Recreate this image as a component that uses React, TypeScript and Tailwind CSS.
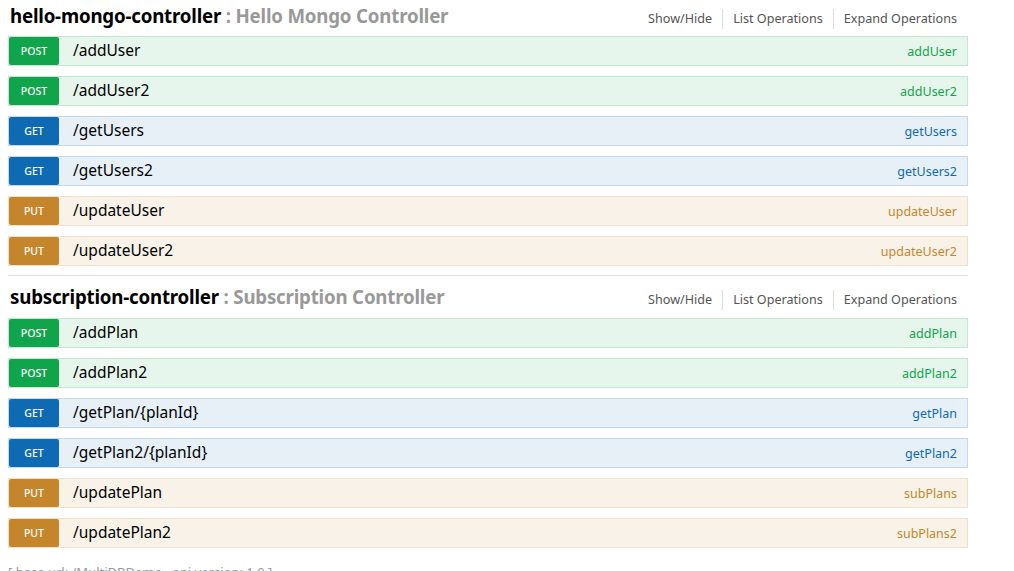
import React from "react";

type Method = "post" | "get" | "put";

const styles: Record<Method, { row: string; badge: string; label: string }> = {
  post: {
    row: "bg-[#e7f6ec] border-[#c3e8d1]",
    badge: "bg-[#10a54a]",
    label: "text-[#10a54a]",
  },
  get: {
    row: "bg-[#e7f0f7] border-[#c3d9ec]",
    badge: "bg-[#0f6ab4]",
    label: "text-[#0f6ab4]",
  },
  put: {
    row: "bg-[#f9f2e9] border-[#f0e0ca]",
    badge: "bg-[#c5862b]",
    label: "text-[#c5862b]",
  },
};

type Op = { method: Method; path: string; name: string };

function Row({ op }: { op: Op }) {
  const s = styles[op.method];
  return (
    <div className={`flex items-center h-[30px] border ${s.row}`}>
      <div
        className={`w-[50px] h-[28px] rounded-[2px] flex items-center justify-center pt-[2px] text-white text-[10.5px] font-medium uppercase ${s.badge}`}
      >
        {op.method}
      </div>
      <div className="pl-[14px] text-[15.5px] text-black flex-1 leading-none pb-[1px]">{op.path}</div>
      <div className={`pr-[10px] text-[12.5px] pt-[2px] ${s.label}`}>{op.name}</div>
    </div>
  );
}

function Heading({ name, desc, h }: { name: string; desc: string; h: string }) {
  return (
    <div className={`flex items-center justify-between ${h}`}>
      <h2 className="text-[18.7px] font-bold pl-[2px] leading-none tracking-[-0.2px]">
        <span className="text-black">{name}</span>
        <span className="text-[#999]"> : {desc}</span>
      </h2>
      <ul className="flex items-center text-[12.6px] text-[#555] pt-[5px]">
        <li className="px-[10px] border-r border-[#ddd] leading-[20px]">Show/Hide</li>
        <li className="px-[10px] border-r border-[#ddd] leading-[20px]">List Operations</li>
        <li className="pl-[10px] pr-[11px] leading-[20px]">Expand Operations</li>
      </ul>
    </div>
  );
}

const group1: Op[] = [
  { method: "post", path: "/addUser", name: "addUser" },
  { method: "post", path: "/addUser2", name: "addUser2" },
  { method: "get", path: "/getUsers", name: "getUsers" },
  { method: "get", path: "/getUsers2", name: "getUsers2" },
  { method: "put", path: "/updateUser", name: "updateUser" },
  { method: "put", path: "/updateUser2", name: "updateUser2" },
];

const group2: Op[] = [
  { method: "post", path: "/addPlan", name: "addPlan" },
  { method: "post", path: "/addPlan2", name: "addPlan2" },
  { method: "get", path: "/getPlan/{planId}", name: "getPlan" },
  { method: "get", path: "/getPlan2/{planId}", name: "getPlan2" },
  { method: "put", path: "/updatePlan", name: "subPlans" },
  { method: "put", path: "/updatePlan2", name: "subPlans2" },
];

export default function App() {
  return (
    <div
      className="bg-white w-[1014px] h-[571px] overflow-hidden pl-[8px]"
      style={{ fontFamily: '"Noto Sans", "Open Sans", sans-serif' }}
    >
      <div className="w-[960px]">
        <Heading name="hello-mongo-controller" desc="Hello Mongo Controller" h="h-[36px] pb-[4px]" />
        <div className="flex flex-col gap-[10px]">
          {group1.map((op) => (
            <Row key={op.path} op={op} />
          ))}
        </div>
        <div className="mt-[9px] h-px bg-[#ddd]" />
        <Heading name="subscription-controller" desc="Subscription Controller" h="h-[42px]" />
        <div className="flex flex-col gap-[10px]">
          {group2.map((op) => (
            <Row key={op.path} op={op} />
          ))}
        </div>
        <div className="mt-[18px] text-[13px] text-[#999] leading-none">
          [ base url: /MultiDBDemo , api version: 1.0 ]
        </div>
      </div>
    </div>
  );
}
